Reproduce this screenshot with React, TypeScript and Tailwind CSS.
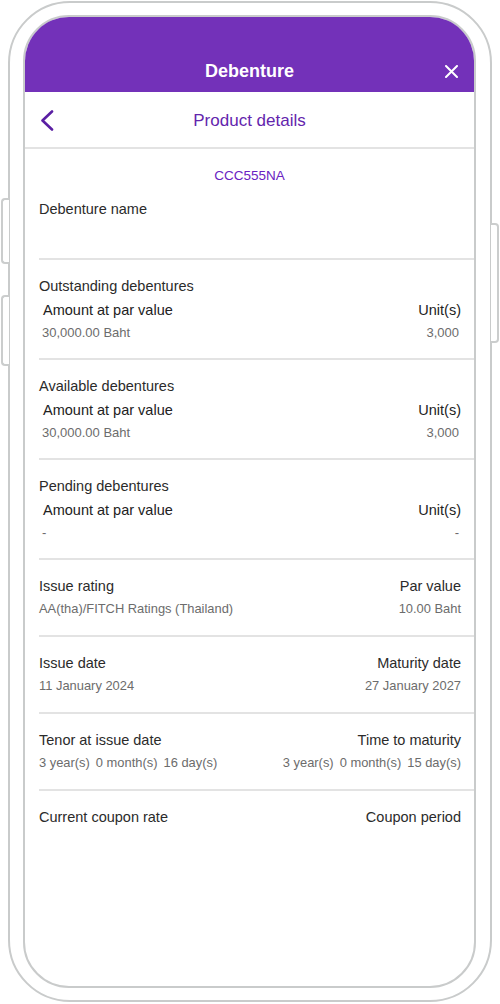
import React from 'react';

const font = { fontFamily: '"Liberation Sans", Arial, sans-serif' };

interface TripleProps {
    title: string;
    amount: string;
    units: string;
}

const TripleSection: React.FC<TripleProps> = ({ title, amount, units }) => (
    <div>
        <div className="pl-[14px] pt-[17px] pb-[17px]">
            <div className="h-[18px] leading-[18px] text-[14.5px] text-[#2b2b2b]">{title}</div>
            <div className="mt-[6px] h-[18px] leading-[18px] flex justify-between pl-[4px] pr-[13px] text-[14.5px] text-[#222]">
                <span>Amount at par value</span>
                <span>Unit(s)</span>
            </div>
            <div className="mt-[6px] h-[16px] leading-[16px] flex justify-between pl-[3px] pr-[15px] text-[13px] text-[#6c6c6c]">
                <span>{amount}</span>
                <span>{units}</span>
            </div>
        </div>
        <div className="ml-[14px] h-[2px] bg-[#e3e3e3]" />
    </div>
);

const Duration: React.FC<{ parts: string[] }> = ({ parts }) => (
    <span className="flex gap-[6px]">
        {parts.map((p) => (
            <span key={p}>{p}</span>
        ))}
    </span>
);

interface PairProps {
    leftLabel: string;
    leftValue?: React.ReactNode;
    rightLabel: string;
    rightValue?: React.ReactNode;
    last?: boolean;
}

const PairSection: React.FC<PairProps> = ({ leftLabel, leftValue, rightLabel, rightValue, last }) => (
    <div>
        <div className="pl-[14px] pr-[13px] pt-[17px] pb-[18px]">
            <div className="h-[18px] leading-[18px] flex justify-between text-[14.5px] text-[#2b2b2b]">
                <span>{leftLabel}</span>
                <span>{rightLabel}</span>
            </div>
            {leftValue !== undefined && (
                <div className="mt-[6px] h-[16px] leading-[16px] flex justify-between text-[12.9px] text-[#6c6c6c]">
                    <span>{leftValue}</span>
                    <span>{rightValue}</span>
                </div>
            )}
        </div>
        {!last && <div className="ml-[14px] h-[2px] bg-[#e3e3e3]" />}
    </div>
);

const App: React.FC = () => {
    return (
        <div className="w-[500px] h-[1004px] bg-white overflow-hidden" style={font}>
            <div className="relative ml-[8px] mt-[1px] w-[484px] h-[1001px] border-2 border-[#c9cbcb] rounded-[62px] pt-[12px] pb-[12px] pl-[13px] pr-[14px]">
                {/* side buttons */}
                <div className="absolute left-[-9px] top-[195px] w-[8px] h-[66px] border-2 border-r-0 border-[#cbcdcd] rounded-l-[4px] bg-white" />
                <div className="absolute left-[-9px] top-[292px] w-[8px] h-[71px] border-2 border-r-0 border-[#cbcdcd] rounded-l-[4px] bg-white" />
                <div className="absolute right-[-9px] top-[220px] w-[8px] h-[120px] border-2 border-l-0 border-[#cbcdcd] rounded-r-[4px] bg-white" />

                <div className="w-full h-full border-2 border-[#c9cbcb] rounded-[46px] overflow-hidden bg-white flex flex-col">
                    {/* purple header */}
                    <div className="h-[75px] bg-[#7331b9] shrink-0">
                        <div className="relative mt-[33px] h-[42px] flex items-center justify-center">
                            <span className="text-white font-bold text-[18px]">Debenture</span>
                            <svg className="absolute right-[16px] top-[15px]" width="13" height="13" viewBox="0 0 13 13" fill="none">
                                <path d="M1 1L12 12M12 1L1 12" stroke="white" strokeWidth="2" strokeLinecap="round" />
                            </svg>
                        </div>
                    </div>

                    {/* sub header */}
                    <div className="relative h-[57px] shrink-0 border-b-2 border-[#e3e3e3] flex items-center justify-center">
                        <svg className="absolute left-[15px] top-[18px]" width="14" height="21" viewBox="0 0 14 21" fill="none">
                            <path d="M12 1.5L2.5 10.5L12 19.5" stroke="#5a1fa3" strokeWidth="2.6" strokeLinecap="round" strokeLinejoin="round" />
                        </svg>
                        <span className="text-[17px] text-[#6325ad] pt-[3px]">Product details</span>
                    </div>

                    {/* content */}
                    <div className="flex-1">
                        <div className="mt-[19px] h-[16px] leading-[16px] text-center text-[13.5px] text-[#6a22c2]">CCC555NA</div>
                        <div className="mt-[16px] pl-[14px] h-[18px] leading-[18px] text-[14.5px] text-[#2b2b2b]">Debenture name</div>
                        <div className="mt-[40px] ml-[14px] h-[2px] bg-[#e3e3e3]" />

                        <TripleSection title="Outstanding debentures" amount="30,000.00 Baht" units="3,000" />
                        <TripleSection title="Available debentures" amount="30,000.00 Baht" units="3,000" />
                        <TripleSection title="Pending debentures" amount="-" units="-" />

                        <PairSection leftLabel="Issue rating" leftValue="AA(tha)/FITCH Ratings (Thailand)" rightLabel="Par value" rightValue="10.00 Baht" />
                        <PairSection leftLabel="Issue date" leftValue="11 January 2024" rightLabel="Maturity date" rightValue="27 January 2027" />
                        <PairSection
                            leftLabel="Tenor at issue date"
                            leftValue={<Duration parts={['3 year(s)', '0 month(s)', '16 day(s)']} />}
                            rightLabel="Time to maturity"
                            rightValue={<Duration parts={['3 year(s)', '0 month(s)', '15 day(s)']} />}
                        />
                        <PairSection leftLabel="Current coupon rate" rightLabel="Coupon period" last />
                    </div>
                </div>
            </div>
        </div>
    );
};

export default App;
